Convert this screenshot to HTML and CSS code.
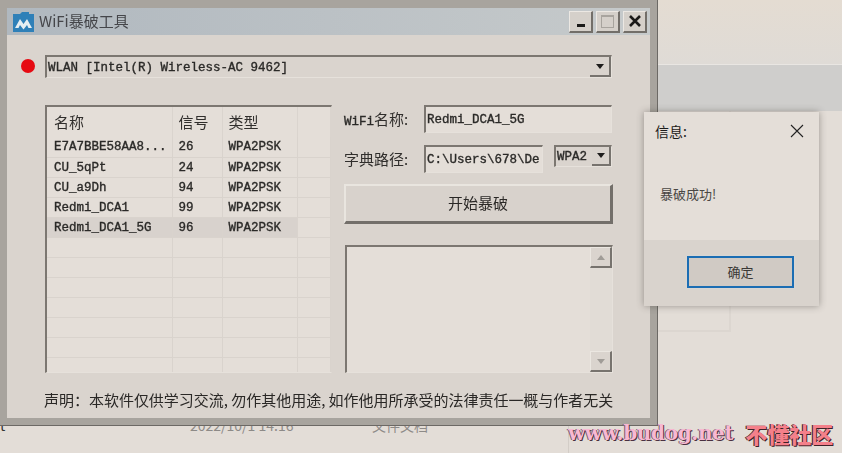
FILE: index.html
```html
<!DOCTYPE html>
<html>
<head lang="zh-CN">
    <meta charset="UTF-8">
    <title>WiFi暴破工具</title>
    <link rel="stylesheet" href="styles.css">
</head>
<body>

<div class="desk">
    <div class="back-top">
        <div class="band-light"></div>
        <div class="band-gray"></div>
        <div class="back-card"></div>
    </div>
    <div class="back-row">
        <span class="back-a">t</span>
        <span class="back-b">2022/10/1 14:16</span>
        <span class="back-c">文件文档</span>
    </div>
</div>

<div class="window">
    <div class="titlebar">
        <svg class="logo" width="21" height="21" viewBox="0 0 21 21">
            <path d="M0 3h7l2 -2h7v2h5v18h-21z" fill="#2f80b8"/>
            <path d="M2 17l5 -9l3.5 5l3.500 -5l5 9h-3.500l-1.500 -3l-3.500 4.500l-3.500 -4.500l-1.500 3z" fill="#e6eef2"/>
        </svg>
        <span class="title">WiFi暴破工具</span>
        <div class="winbtns">
            <button class="winbtn"><i class="min-mark"></i></button>
            <button class="winbtn"><i class="max-mark"></i></button>
            <button class="winbtn close-btn">
                <svg width="14" height="14" viewBox="0 0 14 14"><path d="M2 2l10 10M12 2l-10 10" stroke="#1b1a19" stroke-width="2.600"/></svg>
            </button>
        </div>
    </div>

    <div class="content">
        <div class="adapter-row">
            <span class="dot"></span>
            <div class="combo sunken">
                <span class="mono">WLAN [Intel(R) Wireless-AC 9462]</span>
                <span class="drop"><i class="arrow"></i></span>
            </div>
        </div>

        <div class="main">
            <div class="list sunken">
                <table>
                    <tr class="head"><th>名称</th><th>信号</th><th>类型</th><th></th></tr>
                    <tr><td>E7A7BBE58AA8...</td><td>26</td><td>WPA2PSK</td><td></td></tr>
                    <tr><td>CU_5qPt</td><td>24</td><td>WPA2PSK</td><td></td></tr>
                    <tr><td>CU_a9Dh</td><td>94</td><td>WPA2PSK</td><td></td></tr>
                    <tr><td>Redmi_DCA1</td><td>99</td><td>WPA2PSK</td><td></td></tr>
                    <tr class="picked"><td>Redmi_DCA1_5G</td><td>96</td><td>WPA2PSK</td><td class="nopick"></td></tr>
                    <tr><td></td><td></td><td></td><td></td></tr>
                    <tr><td></td><td></td><td></td><td></td></tr>
                    <tr><td></td><td></td><td></td><td></td></tr>
                    <tr><td></td><td></td><td></td><td></td></tr>
                    <tr><td></td><td></td><td></td><td></td></tr>
                    <tr><td></td><td></td><td></td><td></td></tr>
                    <tr><td></td><td></td><td></td><td></td></tr>
                </table>
            </div>

            <div class="side">
                <div class="field">
                    <span class="label"><span class="mono">WiFi</span>名称:</span>
                    <div class="input wide sunken mono">Redmi_DCA1_5G</div>
                </div>
                <div class="field">
                    <span class="label">字典路径:</span>
                    <div class="input narrow sunken mono">C:\Users\678\De</div>
                    <div class="mini-select sunken">
                        <span class="mono">WPA2</span>
                        <span class="drop small"><i class="arrow"></i></span>
                    </div>
                </div>
                <button class="start">开始暴破</button>
                <div class="log sunken">
                    <div class="scroll">
                        <span class="scroll-btn"><i class="arrow up"></i></span>
                        <span class="scroll-btn"><i class="arrow gray"></i></span>
                    </div>
                </div>
            </div>
        </div>

        <div class="notice">声明：本软件仅供学习交流, 勿作其他用途, 如作他用所承受的法律责任一概与作者无关</div>
    </div>
</div>

<div class="dialog">
    <div class="dialog-body">
        <div class="dialog-head">
            <span>信息:</span>
            <svg width="14" height="14" viewBox="0 0 14 14"><path d="M1 1l12 12M13 1l-12 12" stroke="#222" stroke-width="1.100"/></svg>
        </div>
        <div class="dialog-msg">暴破成功!</div>
    </div>
    <div class="dialog-foot">
        <button class="ok">确定</button>
    </div>
</div>

<div class="watermark">
    <span class="wm-site">www.budog.net</span>
    <span class="wm-name">不懂社区</span>
</div>

</body>
</html>
```

FILE: styles.css
```css
*{
    margin: 0px;
    padding: 0px;
    box-sizing: border-box;
}
html,body{
    width: 842px;
    height: 453px;
    overflow: hidden;
}
body{
    background-color: #e3ddd7;
    font-family: "Noto Sans CJK SC", "Liberation Sans", sans-serif;
    color: #2a2826;
}
.mono{
    font-family: "Liberation Mono", "Noto Sans CJK SC", monospace;
    font-size: 12.5px;
    -webkit-text-stroke: 0.35px #2b2a28;
    color: #2b2a28;
}
.sunken{
    border-style: solid;
    border-width: 2px 1px 1px 2px;
    border-color: #7c7771 #e6e1db #e6e1db #7c7771;
}

/* page behind the window */
.desk{
    height: 453px;
    display: flex;
    flex-direction: column;
    justify-content: space-between;
}
.back-top{
    margin-left: 658px;
}
.band-light{
    height: 64px;
    background: linear-gradient(#e4dcd2, #dfdbd6);
    border-bottom: 1px solid #e9e6e2;
    box-sizing: content-box;
}
.band-gray{
    height: 46px;
    background-color: #cfcecc;
}
.back-card{
    width: 73px;
    height: 221px;
    border-right: 2px solid #dcd6d0;
    border-bottom: 2px solid #dcd6d0;
}
.back-row{
    width: 569px;
    height: 28px;
    border-right: 1px solid #d3cdc7;
    position: relative;
    font-size: 14px;
    color: #8d8a87;
}
.back-row span{
    position: absolute;
    top: -10px;
}
.back-a{ left: 0px; color: #333; }
.back-b{ left: 190px; }
.back-c{ left: 372px; }

/* main window */
.window{
    position: absolute;
    left: 0px;
    top: 0px;
    width: 658px;
    height: 426px;
    padding: 8px 7px 7px 7px;
    background-color: #a8a49e;
    border-right: 1px solid #6c6965;
    border-bottom: 1px solid #6c6965;
    display: flex;
    flex-direction: column;
    filter: blur(0.3px);
}
.titlebar{
    height: 27px;
    flex: none;
    display: flex;
    align-items: center;
    padding: 0px 3px 0px 6px;
    background: linear-gradient(90deg, #b0b8bf, #c6cacb);
}
.logo{
    margin-bottom: 1px;
}
.title{
    margin-left: 5px;
    margin-bottom: 3px;
    font-size: 15px;
    color: #45464a;
}
.winbtns{
    margin-left: auto;
    display: flex;
    gap: 3px;
}
.winbtn{
    width: 24px;
    height: 22px;
    background-color: #d5d0ca;
    border-style: solid;
    border-width: 1px 2px 2px 1px;
    border-color: #ece8e3 #726e69 #726e69 #ece8e3;
    display: flex;
    align-items: center;
    justify-content: center;
}
.min-mark{
    width: 8px;
    height: 3px;
    margin-top: 9px;
    background-color: #1b1a19;
}
.max-mark{
    width: 13px;
    height: 13px;
    border: 1px solid #a8a49e;
    border-top-width: 2px;
}
.content{
    flex: 1;
    padding: 20px 37px 0px 14px;
    background-color: #dad4ce;
}
.adapter-row{
    display: flex;
    align-items: center;
    gap: 10px;
}
.dot{
    width: 14px;
    height: 14px;
    margin-bottom: 2px;
    border-radius: 50%;
    background-color: #e60a12;
}
.combo{
    width: 567px;
    height: 23px;
    display: flex;
    align-items: center;
    justify-content: space-between;
    padding-left: 1px;
}
.combo .mono{
    padding-top: 1px;
}
.drop{
    width: 21px;
    height: 20px;
    background-color: #d9d3cd;
    border-right: 2px solid #77736e;
    border-bottom: 2px solid #77736e;
    display: flex;
    align-items: center;
    justify-content: center;
}
.arrow{
    width: 0px;
    height: 0px;
    border-left: 4.500px solid transparent;
    border-right: 4.500px solid transparent;
    border-top: 5px solid #1e1d1c;
}
.arrow.up{
    border-top: none;
    border-bottom: 5px solid #a09c97;
}
.arrow.gray{
    border-top-color: #a09c97;
}

.main{
    margin-top: 27px;
    margin-left: 24px;
    display: flex;
    gap: 12px;
}
.list{
    width: 287px;
    height: 268px;
    overflow: hidden;
    background-color: #e4ded8;
    border-right: 1px solid #dad4ce;
}
table{
    width: 284px;
    table-layout: fixed;
    border-collapse: collapse;
}
th:nth-child(1),td:nth-child(1){ width: 125px; }
th:nth-child(2),td:nth-child(2){ width: 50px; }
th:nth-child(3),td:nth-child(3){ width: 75px; }
th{
    height: 30px;
    text-align: left;
    padding-left: 6px;
    padding-bottom: 2px;
    font-size: 15px;
    font-weight: normal;
    color: #302e2c;
    border-right: 1px solid #dad4ce;
}
th:nth-child(1),td:nth-child(1){
    padding-left: 7px;
}
td{
    height: 20px;
    padding-left: 6px;
    padding-top: 1px;
    font-family: "Liberation Mono", monospace;
    font-size: 12.5px;
    -webkit-text-stroke: 0.35px #2b2a28;
    color: #2b2a28;
    border-right: 1px solid #d9d3cd;
    border-bottom: 1px solid #d9d3cd;
    white-space: nowrap;
    overflow: hidden;
}
.picked td{
    background-color: #d8d2cd;
}
.picked td.nopick{
    background-color: transparent;
}

.side{
    width: 269px;
    display: flex;
    flex-direction: column;
}
.field{
    height: 28px;
    display: flex;
    align-items: flex-start;
    margin-bottom: 12px;
}
.label{
    width: 80px;
    height: 28px;
    line-height: 28px;
    font-size: 15px;
    color: #302e2c;
}
.input{
    height: 28px;
    line-height: 27px;
    padding-left: 1px;
    background-color: #e4ded8;
    white-space: nowrap;
    overflow: hidden;
}
.wide{ width: 188px; }
.narrow{ width: 119px; }
.mini-select{
    width: 58px;
    height: 22px;
    margin-left: 11px;
    display: flex;
    align-items: center;
    justify-content: space-between;
    padding-left: 1px;
}
.drop.small{
    width: 19px;
    height: 19px;
}
.start{
    width: 269px;
    height: 40px;
    margin-top: -1px;
    padding-bottom: 3px;
    font-family: "Noto Sans CJK SC", sans-serif;
    font-size: 15px;
    color: #2a2826;
    background-color: #d8d2cc;
    border-style: solid;
    border-width: 2px 3px 3px 2px;
    border-color: #e9e5df #736f6a #736f6a #e9e5df;
}
.log{
    width: 268px;
    height: 128px;
    margin-top: 21px;
    margin-left: 1px;
    background-color: #e4ded8;
    display: flex;
    justify-content: flex-end;
}
.scroll{
    width: 22px;
    display: flex;
    flex-direction: column;
    justify-content: space-between;
    background-color: #e1dcd6;
}
.scroll-btn{
    height: 21px;
    background-color: #dad4ce;
    border-style: solid;
    border-width: 1px 2px 2px 1px;
    border-color: #ebe7e1 #77736e #77736e #ebe7e1;
    display: flex;
    align-items: center;
    justify-content: center;
}
.notice{
    margin-top: 17px;
    margin-left: 23px;
    line-height: 20px;
    font-size: 15px;
    letter-spacing: -0.020px;
    white-space: nowrap;
    color: #2a2826;
}

/* message box */
.dialog{
    position: absolute;
    left: 644px;
    top: 112px;
    width: 175px;
    height: 194px;
    background-color: #e4ded8;
    box-shadow: 0px 0px 7px rgba(60, 55, 50, 0.45);
    display: flex;
    flex-direction: column;
}
.dialog-body{
    height: 128px;
    padding: 8px 15px 0px 11px;
}
.dialog-head{
    height: 22px;
    display: flex;
    align-items: center;
    justify-content: space-between;
    font-size: 14px;
    color: #1c1b1a;
}
.dialog-msg{
    margin-top: 42px;
    margin-left: 5px;
    font-size: 13px;
    color: #4a4744;
}
.dialog-foot{
    flex: 1;
    padding: 16px 25px 0px 43px;
    background-color: #d9d3cd;
}
.ok{
    width: 107px;
    height: 32px;
    font-family: "Noto Sans CJK SC", sans-serif;
    font-size: 13px;
    line-height: 24px;
    color: #3a3835;
    background-color: #d0cac4;
    border: 2px solid #1b6db3;
    box-shadow: 0px 0px 2px #d6dde2;
}

/* site stamp */
.watermark{
    position: absolute;
    left: 568px;
    top: 417px;
    display: flex;
    align-items: center;
    gap: 12px;
}
.wm-site{
    font-family: "DejaVu Serif", serif;
    font-size: 20px;
    font-weight: bold;
    letter-spacing: -0.350px;
    color: #f8b8d2;
    text-shadow: 1px 1px 0px #4a3040, -1px 0px 0px #7a5a6c;
}
.wm-name{
    font-family: "Noto Sans CJK SC", sans-serif;
    font-size: 22px;
    font-weight: 900;
    color: #f4808a;
    text-shadow: 1px 1px 0px #3d2228, -1px 0px 0px #3d2228;
}
```
